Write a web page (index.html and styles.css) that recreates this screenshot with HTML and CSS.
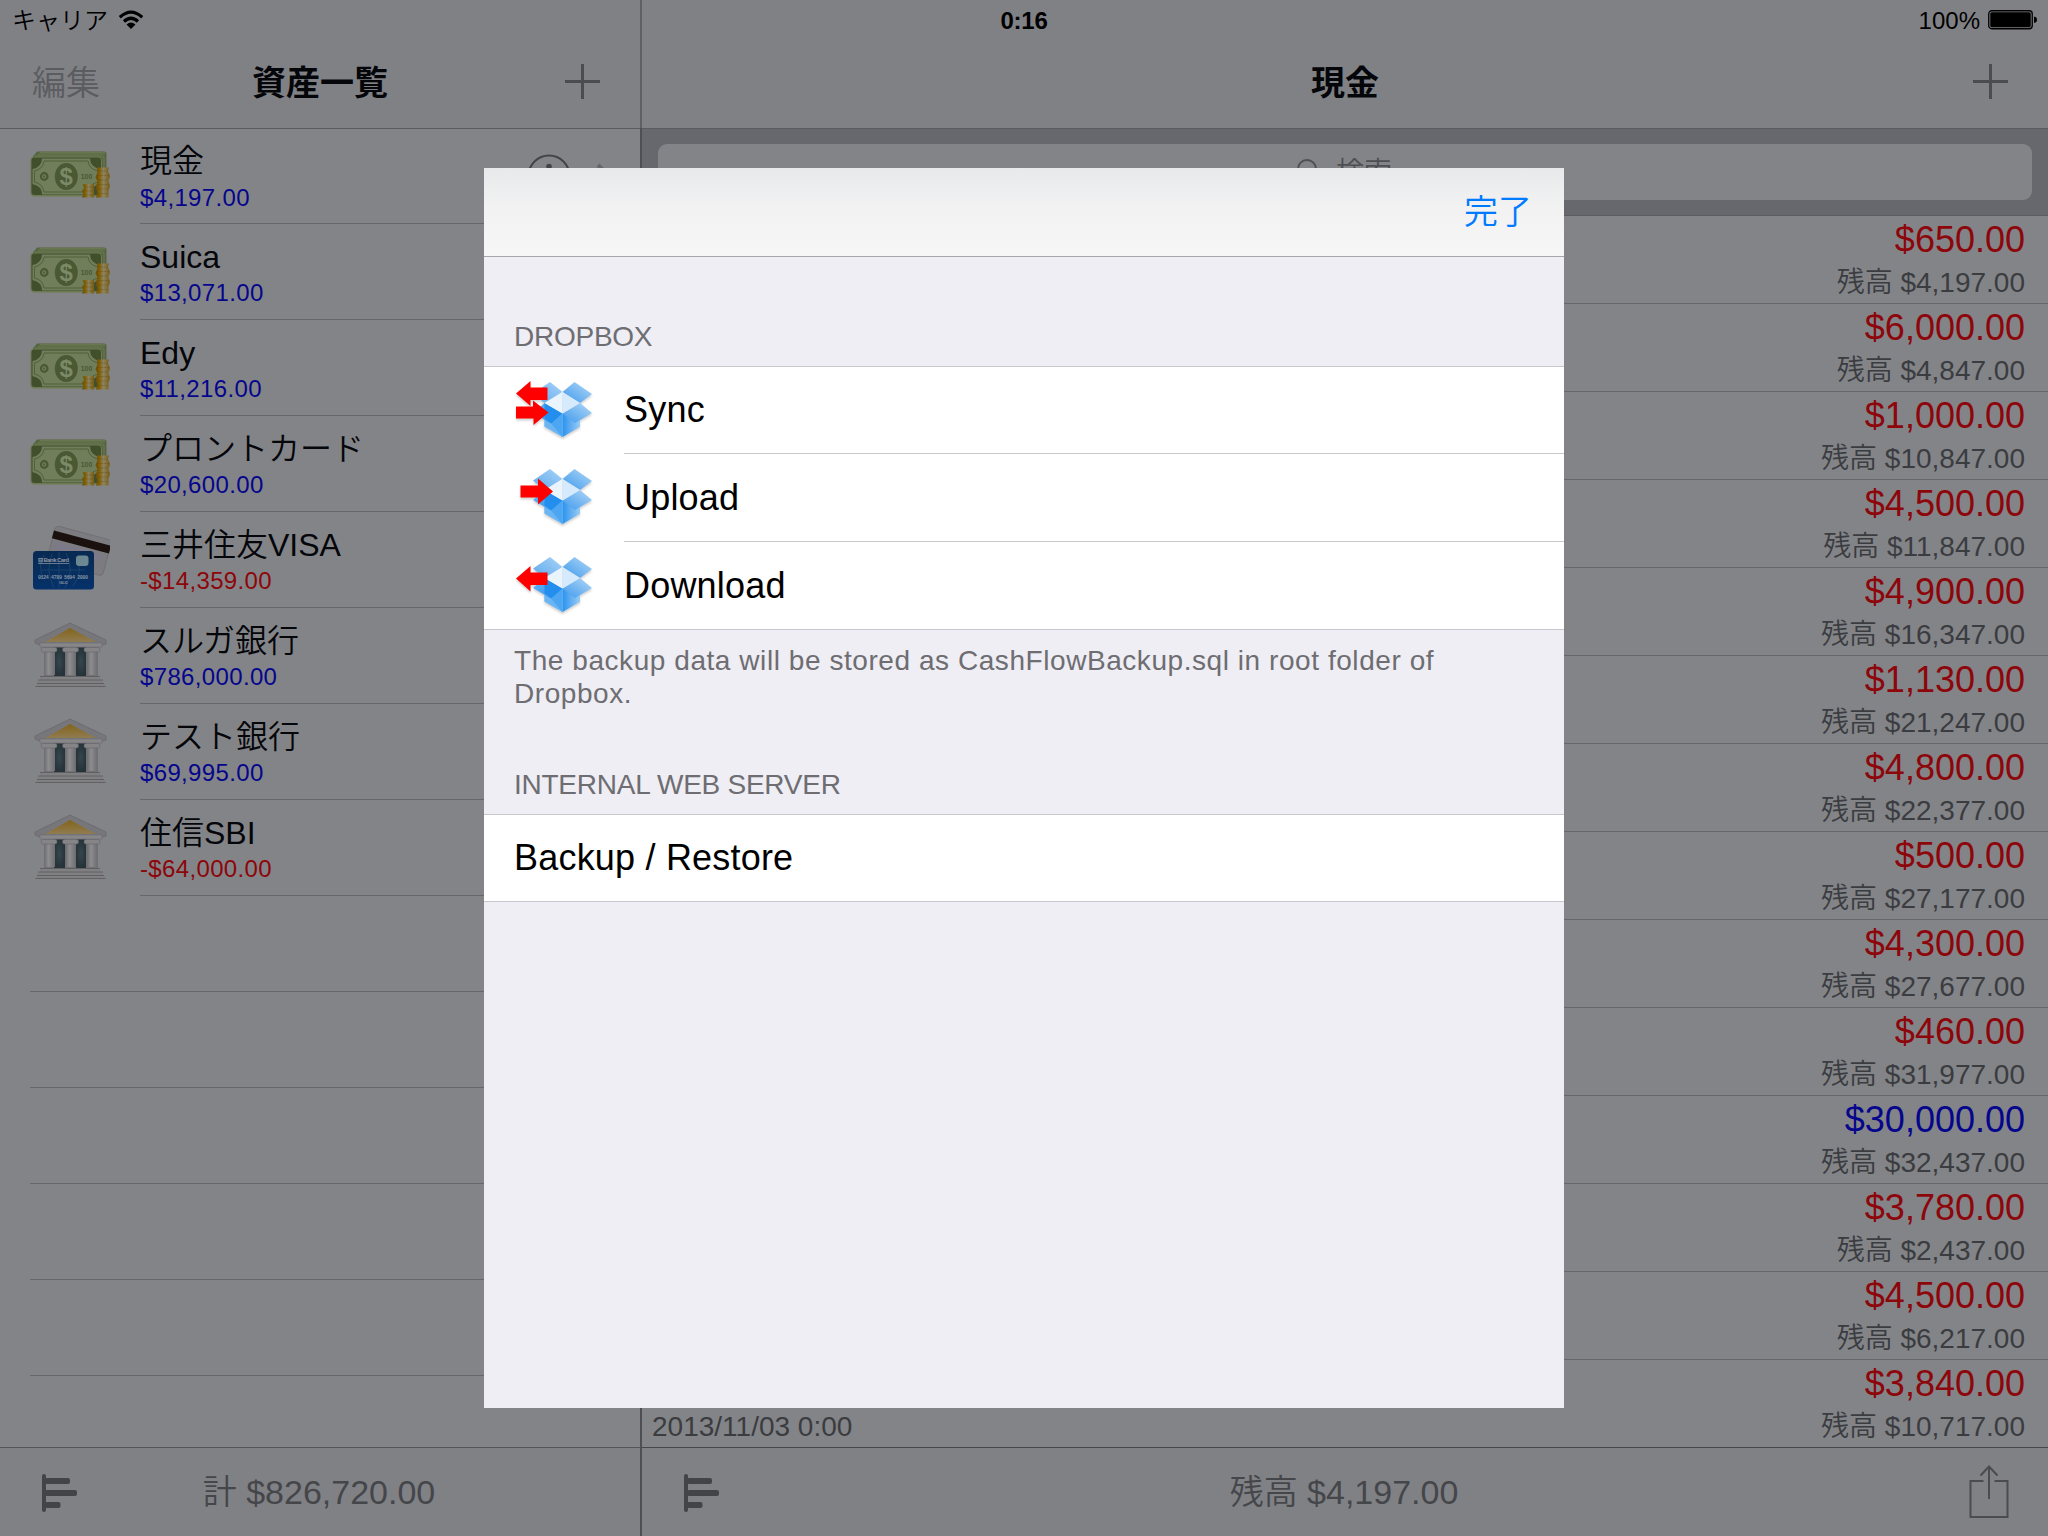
FILE: index.html
```html
<!DOCTYPE html>
<html lang="ja">
<head>
<meta charset="utf-8">
<title>資産一覧</title>
<link rel="stylesheet" href="styles.css">
</head>
<body>
<svg class="defs" width="0" height="0" aria-hidden="true">
  <defs>
    <linearGradient id="coin" x1="0" x2="1" y1="0" y2="0"><stop offset="0" stop-color="#6b4d00"/><stop offset=".3" stop-color="#866208"/><stop offset=".55" stop-color="#8b8464"/><stop offset="1" stop-color="#7b5a0a"/></linearGradient>
    <linearGradient id="gable" x1="0" x2="0" y1="0" y2="1"><stop offset="0" stop-color="#84631a"/><stop offset="1" stop-color="#8f7c50"/></linearGradient>
    <linearGradient id="blueCard" x1="0" x2="0" y1="0" y2="1"><stop offset="0" stop-color="#082a52"/><stop offset="1" stop-color="#06326a"/></linearGradient>
    <linearGradient id="pillar" x1="0" x2="1" y1="0" y2="0"><stop offset="0" stop-color="#6c6c70"/><stop offset=".4" stop-color="#8d8d90"/><stop offset="1" stop-color="#6f6f73"/></linearGradient>
    <radialGradient id="door"><stop offset="0" stop-color="#37474f"/><stop offset="1" stop-color="#263439"/></radialGradient>
    <linearGradient id="flapL" x1="1" x2="0" y1="0" y2="1"><stop offset="0" stop-color="#a9d3f8"/><stop offset="1" stop-color="#5ba9ec"/></linearGradient>
    <linearGradient id="flapR" x1="0" x2="1" y1="1" y2="0"><stop offset="0" stop-color="#3c99ec"/><stop offset="1" stop-color="#b4d8f7"/></linearGradient>
    <linearGradient id="sideL" x1="0" x2="1" y1="0" y2="1"><stop offset="0" stop-color="#6ab4f2"/><stop offset="1" stop-color="#2691ee"/></linearGradient>
    <linearGradient id="sideR" x1="0" x2="1" y1="0" y2="0"><stop offset="0" stop-color="#2b93ee"/><stop offset="1" stop-color="#9acbf5"/></linearGradient>
    <symbol id="cash" viewBox="0 0 80 80">
      <g transform="translate(0 4)">
      <path d="M1 19L7 11.500H74Q76.500 11.500 76.500 14V50H5Z" fill="#566540"/>
      <path d="M5 16H72Q74 16 74 18V48M8 14H75M10 12.300H75" fill="none" stroke="#74815b" stroke-width=".8"/>
      <rect x=".5" y="16.500" width="71.500" height="40" rx="4" fill="#6c7a50"/>
      <rect x="1.500" y="17.500" width="69.500" height="37.500" rx="3" fill="#424f2d"/>
      <path d="M12 18.500H60Q60 27 70 29V44Q60 46 60 54.500H12Q12 46 2.500 44V29Q12 27 12 18.500Z" fill="#717e5b"/>
      <path d="M14 21H58Q59 29 68 31V42Q59 44 58 52H14Q13 44 4.500 42V31Q13 29 14 21Z" fill="none" stroke="#536039" stroke-width="1"/>
      <ellipse cx="36.300" cy="36.500" rx="11.500" ry="13.500" fill="#4a5833"/>
      <text x="36.300" y="45" text-anchor="middle" class="bill-sign">$</text>
      <circle cx="14.200" cy="36.500" r="3.300" fill="none" stroke="#4a5833" stroke-width="2.200"/>
      <circle cx="14.200" cy="36.500" r="1" fill="#4a5833"/>
      <text x="56.500" y="39" text-anchor="middle" class="bill-value">100</text>
      <path d="M53 44H64V57.500H52L53.500 54 52 51 54 48Z" fill="url(#coin)"/>
      <path d="M67 27.500H79L78 31 80 36 78.500 41 80 46 78.500 51V57.500H66L67.500 52 65.500 47 67.500 42 65.500 37 67.500 32Z" fill="url(#coin)"/>
      <path d="M54 47H64M53 51H63M53 55H63M67 31H78M67 35.500H79M67 40H78M67 44.500H79M67 49H78M67 53.500H78" stroke="#5f4a10" stroke-width=".6" opacity=".5"/>
      </g>
    </symbol>
    <symbol id="cards" viewBox="0 0 80 80">
      <g transform="rotate(15 48 31)">
        <rect x="20" y="12" width="58" height="37" rx="4" fill="#7c7c80" stroke="#707074"/>
        <rect x="19.500" y="17.500" width="59" height="8" fill="#1a100d"/>
        <rect x="25" y="28" width="46" height="8" fill="#7c7988"/>
      </g>
      <rect x="3" y="31" width="61" height="38.500" rx="3.500" fill="url(#blueCard)"/>
      <path d="M14 59Q7 47 14 35M29 32V68M12 50H55M22 34Q15 50 24 68M36 33Q45 50 35 68M46 37Q54 51 43 66" stroke="#1f4c74" stroke-width=".7" fill="none"/>
      <rect x="46" y="35.500" width="12.500" height="10.500" rx="3" fill="#6c8792"/>
      <text x="8" y="42" class="card-brand" textLength="31">⊟ Bank Card</text>
      <path d="M8 43.500H39" stroke="#7f8b9b" stroke-width=".8"/>
      <text x="8" y="58.500" class="card-number" textLength="50">0124 4789 5694 2000</text>
      <text x="29" y="64" class="card-name">VALID</text>
    </symbol>
    <symbol id="bank" viewBox="0 0 80 80">
      <path d="M5 24L40 7 76 24V28L71 29H10L5 27Z" fill="#77777b" stroke="#68686c" stroke-width=".8"/>
      <path d="M15 26L40 12 66 26Z" fill="url(#gable)"/>
      <path d="M10 27H72V31H10Z" fill="#87878a" stroke="#6b6b6f" stroke-width=".5"/>
      <rect x="14" y="31" width="54" height="29" fill="#707074"/>
      <rect x="24" y="31.500" width="11" height="28.500" fill="url(#door)"/>
      <rect x="46" y="31.500" width="10" height="28.500" fill="url(#door)"/>
      <g fill="url(#pillar)"><rect x="14" y="34" width="11" height="25"/><rect x="35.500" y="34" width="10" height="25"/><rect x="57" y="34" width="10" height="25"/></g>
      <g fill="#858588" stroke="#67676b" stroke-width=".6"><rect x="11" y="31.500" width="16" height="4.500" rx="2"/><rect x="32.500" y="31.500" width="16" height="4.500" rx="2"/><rect x="54" y="31.500" width="16" height="4.500" rx="2"/></g>
      <path d="M10 60H70V64H73V68H75.500V71H5.500V68H8V64H10Z" fill="#808083"/>
      <path d="M10 60.500H70M8 64H73M7 67.500H74M5.500 70.500H75.500" stroke="#5d5d61" stroke-width=".9"/>
    </symbol>
    <symbol id="box" viewBox="0 0 80 60">
      <path d="M28.500 39V46.500L46.500 57 64 46.500V39L46.500 33Z" fill="#8cc5f5"/>
      <path d="M46.500 33V57L64 46.500V39Z" fill="url(#sideR)"/>
      <path d="M28.500 39V46.500L46.500 57V33Z" fill="#6bb5f3"/>
      <path d="M17 13.500L34 2 46.500 12 28.500 23Z" fill="url(#flapL)"/>
      <path d="M46.500 12L58.500 2 76 14 64 23Z" fill="url(#flapR)"/>
      <path d="M17 33L28.500 23 46.500 33.500 34 43Z" fill="url(#sideL)"/>
      <path d="M46.500 33.500L64 23 76 33 59 43Z" fill="url(#flapR)"/>
      <path d="M46.500 33.500L28.500 23V38L36 44Z" fill="#238eed"/>
      <path d="M46.500 33.500L35 43.500 46.500 57Z" fill="#4ca6f2"/>
      <path d="M28.500 23L46.500 12V33.500Z" fill="#e9f4fd"/>
      <path d="M46.500 12L64 23 46.500 33.500Z" fill="#d5eafc"/>
    </symbol>
    <symbol id="chart" viewBox="0 0 38 40">
      <rect x="0" y="1" width="4" height="38" rx="2"/><rect x="3" y="5" width="25" height="6" rx="2"/><rect x="3" y="17" width="32" height="6" rx="2"/><rect x="3" y="29" width="15.500" height="6" rx="2"/>
    </symbol>
    <symbol id="plus" viewBox="0 0 35 35"><path d="M17.500 0V35M0 17.500H35" stroke="#4b4c50" stroke-width="3"/></symbol>
    <symbol id="info" viewBox="0 0 44 44"><circle cx="22" cy="22" r="20.500" fill="none" stroke="#434448" stroke-width="2"/><circle cx="22" cy="12.500" r="2.800" fill="#434448"/><path d="M18 19H23V33M17 33H28" fill="none" stroke="#434448" stroke-width="2"/></symbol>
    <symbol id="chevron" viewBox="0 0 16 26"><path d="M2 2L13 13 2 24" fill="none" stroke="#65666b" stroke-width="4"/></symbol>
  </defs>
</svg>

<div class="app">
  <header class="status">
    <div class="carrier"><span>キャリア</span>
      <svg width="26" height="20" viewBox="0 0 26 20"><path d="M1.800 7.200Q13-3 24.200 7.200M6 11.500Q13 5 20 11.500" fill="none" stroke="#000" stroke-width="3.200"/><path d="M8.500 14.500Q13 10.500 17.500 14.500L13 19Z"/></svg>
    </div>
    <b class="clock">0:16</b>
    <div class="battery"><span>100%</span>
      <svg width="50" height="20" viewBox="0 0 50 20"><rect x=".75" y=".75" width="43.500" height="18" rx="3" fill="none" stroke="#000" stroke-width="1.300"/><rect x="2.300" y="2.300" width="40.400" height="15" rx="1.500"/><path d="M46 6.500Q49 7 49 9.800T46 13Z"/></svg>
    </div>
  </header>

  <aside class="master">
    <nav class="bar"><span class="edit">編集</span><h1>資産一覧</h1><svg class="plus" width="35" height="35"><use href="#plus"/></svg></nav>
    <ul class="assets" id="assets"></ul>
    <footer class="toolbar"><svg class="chart" width="38" height="40"><use href="#chart"/></svg><span class="total">計 <i>$826,720.00</i></span></footer>
  </aside>

  <main class="detail">
    <nav class="bar"><h1>現金</h1><svg class="plus" width="35" height="35"><use href="#plus"/></svg></nav>
    <div class="search"><div class="field"><svg width="28" height="28" viewBox="0 0 28 28"><circle cx="11" cy="11" r="9" fill="none" stroke="#4e4f53" stroke-width="2"/><path d="M17 17L26 26" stroke="#4e4f53" stroke-width="2"/></svg><span>検索</span></div></div>
    <ul class="entries" id="entries"></ul>
    <footer class="toolbar"><svg class="chart" width="38" height="40"><use href="#chart"/></svg><span class="total">残高 <i>$4,197.00</i></span>
      <svg class="share" width="40" height="54" viewBox="0 0 40 54" fill="none" stroke="#4b4c50" stroke-width="2"><path d="M14.500 16H1.500V52H38.500V16H25.500M20 34V2M11.500 10.500L20 1.500 28.500 10.500"/></svg>
    </footer>
  </main>
</div>

<section class="sheet">
  <nav class="sheet-bar"><span>完了</span></nav>
  <h2 class="group-title first">DROPBOX</h2>
  <ul class="group services">
    <li><svg class="service" width="80" height="60"><use href="#box"/><path d="M0 13.500L14.500 1V7.500H31.500V20H14.500V26ZM0 26.500H17V20.500L32.500 32.500 17.500 45V38.500H0Z" fill="#f00"/></svg><span>Sync</span></li>
    <li><svg class="service" width="80" height="60"><use href="#box"/><path d="M4.500 18.500H22V11.500L37 24.500 22 37.500V30.500H4.500Z" fill="#f00"/></svg><span>Upload</span></li>
    <li><svg class="service" width="80" height="60"><use href="#box"/><path d="M0 23.500L14.500 11V17.500H31.500V30H14.500V36.500Z" fill="#f00"/></svg><span>Download</span></li>
  </ul>
  <p class="note">The backup data will be stored as CashFlowBackup.sql in root folder of Dropbox.</p>
  <h2 class="group-title second">INTERNAL WEB SERVER</h2>
  <ul class="group"><li class="plain"><span>Backup / Restore</span></li></ul>
</section>
<script src="app.js"></script>
</body>
</html>
```
FILE: styles.css
```css
* { box-sizing: border-box; margin: 0; padding: 0; }
body { width: 2048px; height: 1536px; overflow: hidden; position: relative; background: #838488; color: #05060a; font-family: "Liberation Sans", "Noto Sans CJK JP", sans-serif; }
ul { list-style: none; }
i { font-style: normal; }
svg { display: block; flex: none; }
.defs { position: absolute; }
.app { width: 2048px; height: 1536px; display: grid; grid-template: 40px 1496px / 642px 1406px; }
.status { grid-column: 1 / 3; display: grid; grid-template-columns: 1fr 200px 1fr; align-items: center; background: #808185; padding: 0 10px 0 12px; font-size: 24px; color: #000; }
.carrier { display: flex; align-items: center; gap: 10px; }
.carrier span { font-weight: 350; margin-top: -3px; }
.clock { text-align: center; letter-spacing: -.2px; padding: 1px 2px 0 0; }
.battery { display: flex; justify-content: flex-end; align-items: center; gap: 8px; }
.battery span { padding-top: 1px; }
.master, .detail { display: flex; flex-direction: column; position: relative; }
.master { border-right: 2px solid #4e4f53; }
.master::before { content: ""; position: absolute; right: -2px; top: -40px; width: 2px; height: 128px; background: #606165; }
.bar { height: 89px; flex: none; border-bottom: 1px solid #5a5b5f; background: #808185; display: grid; grid-template-columns: 1fr auto 1fr; align-items: center; padding: 0 40px 5px; }
.bar h1 { grid-column: 2; font-size: 34px; line-height: 50px; font-weight: 700; padding-top: 3px; }
.bar .plus { justify-self: end; }
.edit { font-size: 34px; font-weight: 350; color: #5b5c60; line-height: 50px; margin-left: -8px; padding-top: 3px; }
.assets { flex: 1; overflow: hidden; margin-top: -1px; border-top: 1px solid #5a5b5f; }
.asset { height: 96px; display: flex; padding-left: 30px; }
.asset:first-child { height: 95px; }
.asset:first-child .pic { margin-top: 7px; }
.asset:first-child .name { padding-top: 12px; }
.asset .pic { width: 80px; height: 80px; margin: 8px 30px 0 0; }
.asset .label { flex: 1; border-bottom: 1px solid #66676b; }
.asset .name { font-size: 32px; line-height: 40px; padding-top: 13px; height: 53px; font-weight: 350; }
.asset .sum { font-size: 24px; line-height: 32px; letter-spacing: .35px; }
.asset .more { display: flex; align-items: center; gap: 25px; padding-right: 28px; border-bottom: 1px solid #66676b; }
.in { color: #06068c; }
.out { color: #8c060b; }
.bill-sign { font: 700 24px "Liberation Sans", sans-serif; fill: #7c8966; }
.bill-value { font: 700 7px "Liberation Sans", sans-serif; fill: #4a5833; }
.card-brand { font: 700 6px "Liberation Sans", sans-serif; fill: #8e959f; }
.card-number { font: 700 5px "Liberation Mono", monospace; fill: #8390a0; }
.card-name { font: 700 3px "Liberation Sans", sans-serif; fill: #8390a0; }
.toolbar { height: 89px; flex: none; border-top: 1px solid #55565a; background: #808185; display: grid; grid-template-columns: 120px 1fr 120px; align-items: center; color: #45464a; font-size: 34px; }
.detail .toolbar { border-top-color: #46474b; }
.chart { margin: 2px 0 0 42px; fill: #434448; }
.total { text-align: center; font-weight: 350; white-space: nowrap; padding: 0 2px 5px 0; }
.share { justify-self: end; margin-right: 39px; }
.search { height: 87px; flex: none; background: #67686d; padding: 15px 16px; border-bottom: 1px solid #5c5d61; }
.field { height: 56px; border-radius: 9px; background: #838488; display: flex; justify-content: center; gap: 14px; align-items: center; font-size: 28px; font-weight: 350; color: #4e4f53; }
.field span { margin: -4px 2px 0 -2px; }
.entries { flex: 1; overflow: hidden; }
.entry { height: 88px; border-bottom: 1px solid #66676b; padding: 2px 23px 0 10px; text-align: right; }
.entry:last-child { border: 0; }
.entry .amount { font-size: 36px; line-height: 44px; height: 45px; }
.entry .rest { display: flex; justify-content: space-between; font-size: 28px; line-height: 40px; font-weight: 350; color: #3b3c40; }
.entry .rest .bal { margin-left: auto; }
.sheet { position: absolute; left: 484px; top: 168px; width: 1080px; height: 1240px; background: #efeef4; color: #000; }
.sheet-bar { height: 89px; border-bottom: 1px solid #a6a6aa; background: linear-gradient(#e8e9ea, #f2f2f3 45%, #f6f6f7); display: flex; justify-content: flex-end; align-items: center; padding: 0 32px 6px; color: #007aff; font-size: 34px; font-weight: 350; }
.group-title { font-size: 28px; line-height: 32px; font-weight: 400; color: #6d6d72; padding-left: 30px; letter-spacing: -.25px; }
.first { padding-top: 64px; height: 109px; }
.second { padding-top: 58px; height: 103px; }
.group { background: #fff; border-top: 1px solid #c8c7cc; border-bottom: 1px solid #c8c7cc; }
.group li { height: 88px; display: flex; align-items: center; padding-left: 32px; font-size: 36px; letter-spacing: .2px; }
.group li:last-child, .services li:first-child { height: 87px; }
.group li span { flex: 1; align-self: stretch; display: flex; align-items: center; margin-left: 28px; border-bottom: 1px solid #c8c7cc; }
.group li:last-child span { border: 0; }
.group li.plain { padding-left: 30px; height: 86px; }
.group .plain span { margin-left: 0; }
.service { margin-bottom: 2px; filter: drop-shadow(0 2px 1px rgba(0, 0, 0, .18)); }
.note { font-size: 28px; line-height: 33px; letter-spacing: .56px; color: #6d6d72; padding: 14px 100px 0 30px; height: 81px; }
```
FILE: app.js
```js
const assets = [
  ["cash", "現金", "$4,197.00"],
  ["cash", "Suica", "$13,071.00"],
  ["cash", "Edy", "$11,216.00"],
  ["cash", "プロントカード", "$20,600.00"],
  ["cards", "三井住友VISA", "-$14,359.00"],
  ["bank", "スルガ銀行", "$786,000.00"],
  ["bank", "テスト銀行", "$69,995.00"],
  ["bank", "住信SBI", "-$64,000.00"],
];
const more = '<div class="more"><svg width="44" height="44"><use href="#info"/></svg><svg width="16" height="26"><use href="#chevron"/></svg></div>';
const assetRows = assets.map(([icon, name, sum]) =>
  `<li class="asset"><svg class="pic"><use href="#${icon}"/></svg><div class="label"><div class="name">${name}</div><div class="sum ${sum[0] === "-" ? "out" : "in"}">${sum}</div></div>${more}</li>`);
for (let i = 0; i < 5; i++) assetRows.push('<li class="asset"><div class="label"></div></li>');
document.getElementById("assets").innerHTML = assetRows.join("");

const entries = [
  ["$650.00", "$4,197.00"], ["$6,000.00", "$4,847.00"], ["$1,000.00", "$10,847.00"],
  ["$4,500.00", "$11,847.00"], ["$4,900.00", "$16,347.00"], ["$1,130.00", "$21,247.00"],
  ["$4,800.00", "$22,377.00"], ["$500.00", "$27,177.00"], ["$4,300.00", "$27,677.00"],
  ["$460.00", "$31,977.00"], ["$30,000.00", "$32,437.00", "in"], ["$3,780.00", "$2,437.00"],
  ["$4,500.00", "$6,217.00"], ["$3,840.00", "$10,717.00", "out", "2013/11/03 0:00"],
];
document.getElementById("entries").innerHTML = entries.map(([amount, rest, kind = "out", date = ""]) =>
  `<li class="entry"><div class="amount ${kind}">${amount}</div><div class="rest"><span>${date}</span><span class="bal">残高 ${rest}</span></div></li>`).join("");
```
